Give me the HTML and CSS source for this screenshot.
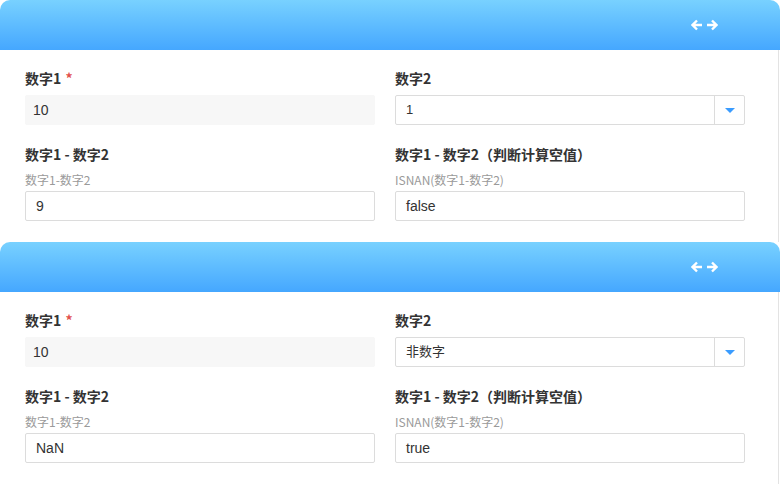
FILE: index.html
```html
<!DOCTYPE html>
<html>
<head>
    <meta charset="utf-8">
    <title>数字计算</title>
    <link rel="stylesheet" href="styles.css">
</head>
<body>
    <div class="panel">
        <div class="panel-head">
            <svg class="arrow" width="12" height="12" viewBox="0 0 12 12"><path d="M6 1.5 1.5 6 6 10.5M1.5 6H11" /></svg>
            <svg class="arrow" width="12" height="12" viewBox="0 0 12 12"><path d="M6 1.5 10.5 6 6 10.5M10.5 6H1" /></svg>
        </div>
        <div class="panel-body">
            <div class="field">
                <label>数字1 <span class="req">*</span></label>
                <div class="input readonly">10</div>
            </div>
            <div class="field">
                <label>数字2</label>
                <div class="input select">
                    <span class="select-value">1</span>
                    <span class="caret"></span>
                </div>
            </div>
            <div class="field">
                <label>数字1 - 数字2</label>
                <div class="hint">数字1-数字2</div>
                <div class="input">9</div>
            </div>
            <div class="field">
                <label>数字1 - 数字2（判断计算空值）</label>
                <div class="hint">ISNAN(数字1-数字2)</div>
                <div class="input">false</div>
            </div>
        </div>
    </div>

    <div class="panel">
        <div class="panel-head">
            <svg class="arrow" width="12" height="12" viewBox="0 0 12 12"><path d="M6 1.5 1.5 6 6 10.5M1.5 6H11" /></svg>
            <svg class="arrow" width="12" height="12" viewBox="0 0 12 12"><path d="M6 1.5 10.5 6 6 10.5M10.5 6H1" /></svg>
        </div>
        <div class="panel-body">
            <div class="field">
                <label>数字1 <span class="req">*</span></label>
                <div class="input readonly">10</div>
            </div>
            <div class="field">
                <label>数字2</label>
                <div class="input select">
                    <span class="select-value">非数字</span>
                    <span class="caret"></span>
                </div>
            </div>
            <div class="field">
                <label>数字1 - 数字2</label>
                <div class="hint">数字1-数字2</div>
                <div class="input">NaN</div>
            </div>
            <div class="field">
                <label>数字1 - 数字2（判断计算空值）</label>
                <div class="hint">ISNAN(数字1-数字2)</div>
                <div class="input">true</div>
            </div>
        </div>
    </div>
</body>
</html>
```

FILE: styles.css
```css
* {
    box-sizing: border-box;
    margin: 0;
    padding: 0;
}
body {
    background: #fff;
    font-family: "Liberation Sans", Arial, "Noto Sans CJK SC", sans-serif;
    color: #333;
    width: 780px;
}
.panel {
    width: 780px;
}
.panel-head {
    height: 50px;
    border-radius: 10px 10px 0 0;
    background: linear-gradient(to bottom, #78d1ff, #45a7ff);
    display: flex;
    justify-content: flex-end;
    align-items: center;
    gap: 3px;
    padding-right: 62px;
}
.arrow path {
    fill: none;
    stroke: #fff;
    stroke-width: 2.4;
}
.panel-body {
    border-right: 1px solid #e3e3e3;
    margin-right: 1px;
    padding: 18px 0 21px 25px;
    display: grid;
    grid-template-columns: 350px 350px;
    column-gap: 20px;
    row-gap: 19px;
}
.field label {
    display: block;
    font-family: "Noto Sans CJK SC", sans-serif;
    font-size: 14px;
    font-weight: 700;
    line-height: 20px;
    margin-bottom: 7px;
    color: #333;
}
.req {
    color: #e2514c;
    margin-left: 1px;
}
.hint {
    font-family: "Noto Sans CJK SC", sans-serif;
    font-size: 12px;
    color: #9a9a9a;
    line-height: 18px;
    margin-top: -7px;
    margin-bottom: 2px;
    padding-top: 7px;
}
.input {
    height: 30px;
    border: 1px solid #dcdcdc;
    border-radius: 2px;
    padding: 0 10px;
    font-size: 14px;
    line-height: 28px;
    color: #333;
}
.input.readonly {
    border-color: #f7f7f7;
    background: #f7f7f7;
    padding-left: 7px;
}
.input.select {
    display: flex;
    padding-right: 0;
}
.select-value {
    flex: 1;
    font-family: "Liberation Sans", "Noto Sans CJK SC", sans-serif;
    font-size: 13px;
}
.caret {
    width: 30px;
    border-left: 1px solid #dcdcdc;
    position: relative;
}
.caret::after {
    content: "";
    position: absolute;
    left: 10px;
    top: 12px;
    border-left: 5px solid transparent;
    border-right: 5px solid transparent;
    border-top: 5px solid #3a9cff;
}
```
